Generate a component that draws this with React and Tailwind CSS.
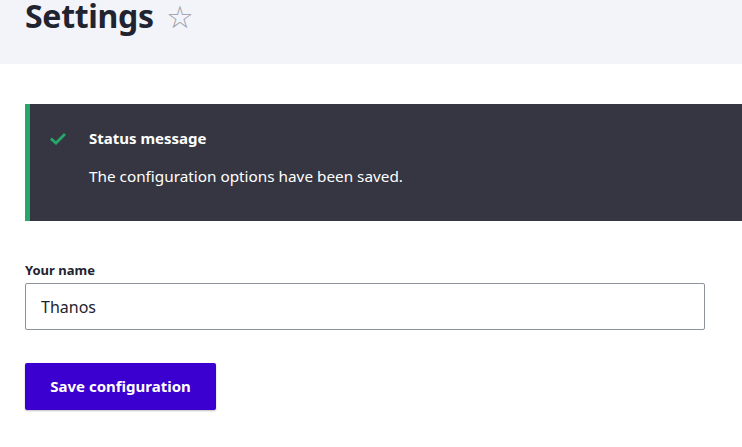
export default function App() {
    return (
        <div className="min-h-[447px] bg-white font-['Noto_Sans',sans-serif] text-[#222330] overflow-hidden">
            <div className="bg-[#f3f4f9] h-[64px] px-[25px] flex items-start">
                <h1 className="text-[32px] font-bold leading-[32px] flex items-center tracking-[-0.3px]">
                    Settings
                    <span className="ml-[12px] text-[31px] font-normal text-[#9b9ba8] leading-none">☆</span>
                </h1>
            </div>

            <div className="pl-[25px] pt-[40px]">
                <div className="bg-[#353641] border-l-[5px] border-[#26a769] h-[117px] flex pl-[20px] pt-[23px]">
                    <svg className="mt-[5px] w-[16px] h-[14px]" viewBox="0 0 16 14">
                        <path d="M2 7.5 L6 11 L14 3" fill="none" stroke="#26a769" strokeWidth="2.8" strokeLinecap="square" />
                    </svg>
                    <div className="ml-[23px] text-white">
                        <div className="text-[15px] font-bold leading-[22px]">Status message</div>
                        <div className="text-[15.3px] leading-[22px] mt-[16px]">The configuration options have been saved.</div>
                    </div>
                </div>
            </div>

            <div className="px-[25px] pt-[39px]">
                <label className="block text-[13px] font-bold leading-[20px]">Your name</label>
                <input
                    className="mt-[3px] w-[680px] h-[47px] border border-[#8e929c] rounded-[2px] px-[15px] text-[16px] text-[#222330] outline-none"
                    defaultValue="Thanos"
                />
                <div className="pt-[33px]">
                    <button className="bg-[#3b00cf] text-white text-[15px] font-bold h-[47px] w-[191px] rounded-[2px] shadow-[0_1px_2px_rgba(0,0,0,0.25)]">
                        Save configuration
                    </button>
                </div>
            </div>
        </div>
    )
}
